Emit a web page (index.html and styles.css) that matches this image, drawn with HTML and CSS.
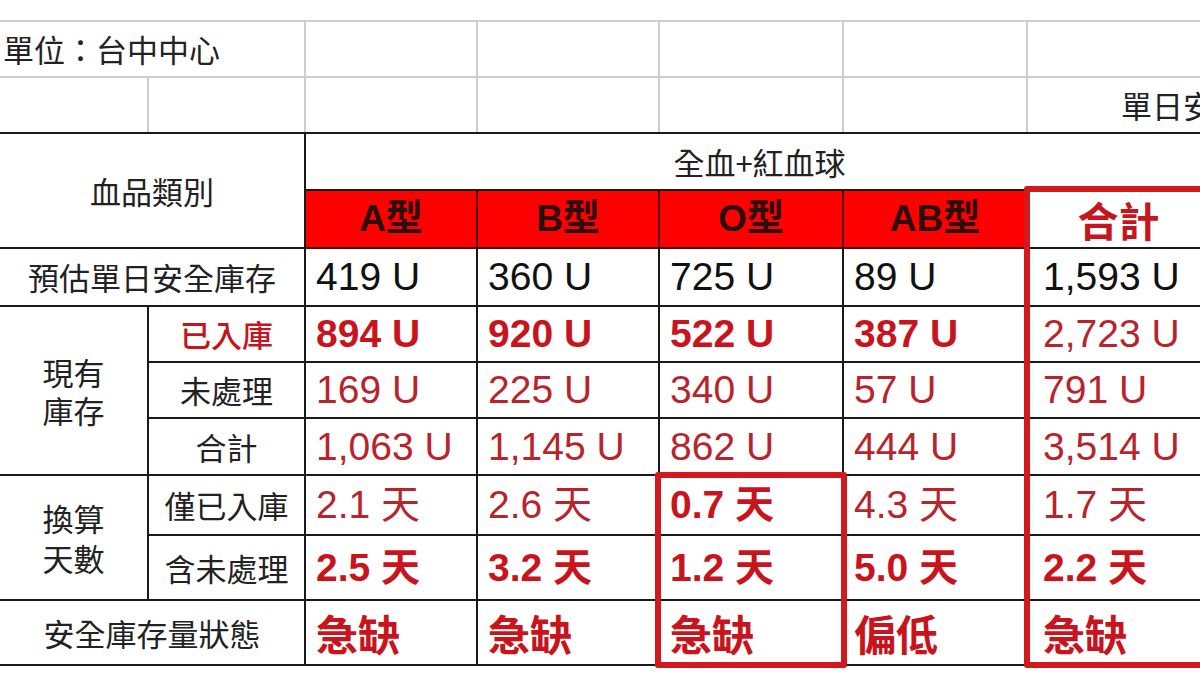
FILE: index.html
```html
<!DOCTYPE html>
<html lang="zh-Hant">
<head>
<meta charset="utf-8">
<title>單位：台中中心 血品庫存</title>
<link rel="stylesheet" href="styles.css">
</head>
<body>
<div class="sheet">
  <table class="grid">
    <colgroup>
      <col class="c0"><col class="c1"><col class="ca"><col class="cb"><col class="co"><col class="cab"><col class="ct">
    </colgroup>
    <tr class="r-top">
      <td colspan="2" class="unit">單位：台中中心</td>
      <td></td><td></td><td></td><td></td><td></td>
    </tr>
    <tr class="r-top2">
      <td></td><td></td><td></td><td></td><td></td><td></td>
      <td class="daily">單日安全庫存量</td>
    </tr>
    <tr class="r-h1">
      <td colspan="2" rowspan="2" class="lbl">血品類別</td>
      <td colspan="5" class="group">全血+紅血球</td>
    </tr>
    <tr class="r-h2">
      <td class="type">A型</td>
      <td class="type">B型</td>
      <td class="type">O型</td>
      <td class="type">AB型</td>
      <td class="type-total">合計</td>
    </tr>
    <tr class="r-a">
      <td colspan="2" class="lbl">預估單日安全庫存</td>
      <td class="num">419 U</td>
      <td class="num">360 U</td>
      <td class="num">725 U</td>
      <td class="num">89 U</td>
      <td class="num tot">1,593 U</td>
    </tr>
    <tr class="r-b">
      <td rowspan="3" class="lbl two-a">現有<br>庫存</td>
      <td class="lbl red-lbl">已入庫</td>
      <td class="num red b">894 U</td>
      <td class="num red b">920 U</td>
      <td class="num red b">522 U</td>
      <td class="num red b">387 U</td>
      <td class="num red tot">2,723 U</td>
    </tr>
    <tr class="r-b">
      <td class="lbl">未處理</td>
      <td class="num red">169 U</td>
      <td class="num red">225 U</td>
      <td class="num red">340 U</td>
      <td class="num red">57 U</td>
      <td class="num red tot">791 U</td>
    </tr>
    <tr class="r-c">
      <td class="lbl">合計</td>
      <td class="num red">1,063 U</td>
      <td class="num red">1,145 U</td>
      <td class="num red">862 U</td>
      <td class="num red">444 U</td>
      <td class="num red tot">3,514 U</td>
    </tr>
    <tr class="r-d">
      <td rowspan="2" class="lbl two-b">換算<br>天數</td>
      <td class="lbl">僅已入庫</td>
      <td class="num red">2.1 天</td>
      <td class="num red">2.6 天</td>
      <td class="num red b">0.7 天</td>
      <td class="num red">4.3 天</td>
      <td class="num red tot">1.7 天</td>
    </tr>
    <tr class="r-e">
      <td class="lbl">含未處理</td>
      <td class="num red b">2.5 天</td>
      <td class="num red b">3.2 天</td>
      <td class="num red b">1.2 天</td>
      <td class="num red b">5.0 天</td>
      <td class="num red b tot">2.2 天</td>
    </tr>
    <tr class="r-e">
      <td colspan="2" class="lbl">安全庫存量狀態</td>
      <td class="num red b status">急缺</td>
      <td class="num red b status">急缺</td>
      <td class="num red b status">急缺</td>
      <td class="num red b status">偏低</td>
      <td class="num red b status tot">急缺</td>
    </tr>
  </table>
  <div class="hl hl-o"></div>
  <div class="hl hl-total"></div>
</div>
</body>
</html>
```
FILE: styles.css
```css
html, body {
  margin: 0;
  padding: 0;
  background: #ffffff;
  overflow: hidden;
  width: 1200px;
  height: 675px;
}

.sheet {
  position: relative;
  padding-top: 20px;
  width: 1230px;
}

.grid {
  border-collapse: collapse;
  table-layout: fixed;
  width: 1210px;
  font-family: "Liberation Sans", "Noto Sans CJK TC", sans-serif;
  color: #1c1c1c;
}

.c0 { width: 148px; }
.c1 { width: 157px; }
.ca { width: 172px; }
.cb { width: 182px; }
.co { width: 184px; }
.cab { width: 184px; }
.ct { width: 183px; }

.grid td {
  border: 2px solid #1a1a1a;
  padding: 0;
  vertical-align: middle;
  white-space: nowrap;
  overflow: hidden;
  line-height: 44px;
}

.r-top td, .r-top2 td {
  border-color: #cdcdcd;
}
.r-top td { height: 54px; }
.r-top2 td { height: 54px; border-bottom: 2px solid #1a1a1a; }
.r-h1 td { height: 55px; }
.r-h2 td { height: 56px; }
.r-a td { height: 56px; }
.r-b td { height: 54px; }
.r-c td { height: 55px; }
.r-d td { height: 58px; }
.r-e td { height: 63px; }

.grid tr:first-child td { border-top-color: #cdcdcd; }
.grid td:first-child { border-left: none; }

.unit {
  font-family: "Noto Sans CJK TC", sans-serif;
  font-size: 31px;
  padding-left: 3px !important;
  text-align: left;
  color: #222;
}

.daily {
  font-family: "Noto Sans CJK TC", sans-serif;
  font-size: 31px;
  padding-left: 93px !important;
  color: #222;
}

.lbl {
  font-family: "Noto Sans CJK TC", sans-serif;
  font-size: 31px;
  text-align: center;
  color: #222;
}

.grid .two-a { line-height: 38px; }
.grid .two-b { line-height: 40px; }

.red-lbl {
  color: #c4141c;
  font-weight: 500;
}

.group {
  font-family: "Noto Sans CJK TC", sans-serif;
  font-size: 31px;
  text-align: center;
  color: #222;
  padding-left: 4px !important;
}

.type {
  background: #ff0000;
  border-color: #4a0a0a !important;
  text-align: center;
  font-family: "Liberation Sans", "Noto Sans CJK TC", sans-serif;
  font-weight: 700;
  font-size: 37px;
  color: #2a0d0d;
}

.type-total {
  text-align: center;
  font-family: "Noto Sans CJK TC", sans-serif;
  font-weight: 700;
  font-size: 41px;
  color: #c4161c;
}

.num {
  font-size: 39px;
  padding-left: 10px !important;
  text-align: left;
  color: #111;
}
.num.tot { padding-left: 15px !important; }

.red { color: #b8242c; }
.red.b { color: #c8141c; font-weight: 700; }

.status {
  font-family: "Noto Sans CJK TC", sans-serif;
  font-size: 42px;
}

.hl {
  position: absolute;
  border: 6px solid #d3181e;
  border-radius: 3px;
  box-sizing: border-box;
  pointer-events: none;
}
.hl-o {
  left: 655px;
  top: 472px;
  width: 192px;
  height: 196px;
}
.hl-total {
  left: 1024px;
  top: 186px;
  width: 200px;
  height: 482px;
}
```
